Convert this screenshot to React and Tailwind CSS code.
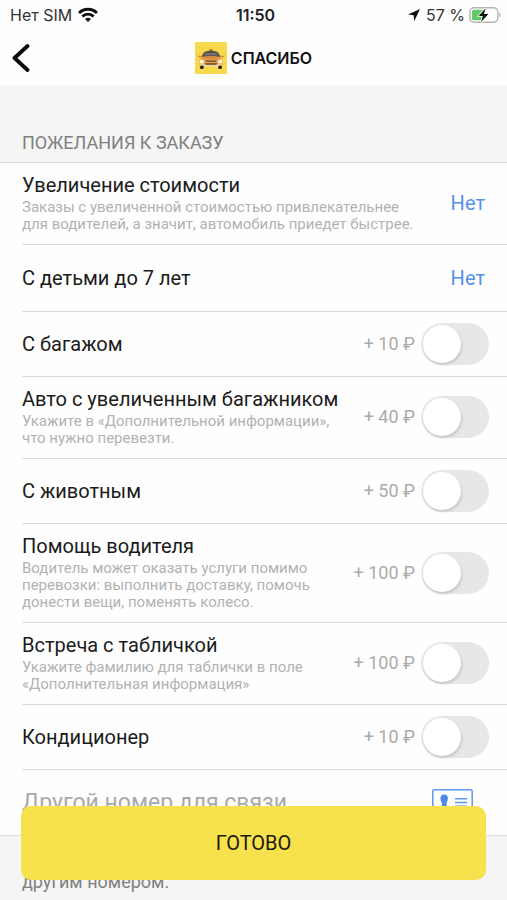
import React from "react";

const rows = [
  {
    id: "raise",
    title: "Увеличение стоимости",
    lines: ["Заказы с увеличенной стоимостью привлекательнее", "для водителей, а значит, автомобиль приедет быстрее."],
    value: "Нет",
  },
  { id: "kids", title: "С детьми до 7 лет", value: "Нет" },
  { id: "luggage", title: "С багажом", price: "+ 10 ₽" },
  {
    id: "trunk",
    title: "Авто с увеличенным багажником",
    lines: ["Укажите в «Дополнительной информации»,", "что нужно перевезти."],
    price: "+ 40 ₽",
  },
  { id: "pet", title: "С животным", price: "+ 50 ₽" },
  {
    id: "help",
    title: "Помощь водителя",
    lines: ["Водитель может оказать услуги помимо", "перевозки: выполнить доставку, помочь", "донести вещи, поменять колесо."],
    price: "+ 100 ₽",
  },
  {
    id: "sign",
    title: "Встреча с табличкой",
    lines: ["Укажите фамилию для таблички в поле", "«Дополнительная информация»"],
    price: "+ 100 ₽",
  },
  { id: "ac", title: "Кондиционер", price: "+ 10 ₽" },
];

function WifiIcon() {
  return (
    <svg className="h-4 w-5" viewBox="0 0 20 16" fill="none" stroke="#111" strokeWidth="2.8" aria-hidden="true">
      <path d="M1 6C6 1 14 1 19 6" />
      <path d="M4.3 9.6c3.3-3.300 8.100-3.300 11.400 0" />
      <path d="M10 15l-3-3c1.700-1.700 4.300-1.700 6 0z" fill="#111" stroke="none" />
    </svg>
  );
}

function BatteryIcon() {
  return (
    <svg className="h-4 w-8" viewBox="0 0 32 16" aria-hidden="true">
      <rect x="0.8" y="0.8" width="28" height="14.4" rx="4.4" fill="#fff" stroke="#b4b4b4" strokeWidth="1.4" />
      <path d="M30.3 5.6c1.6.6 1.6 4.2 0 4.8z" fill="#a9a9a9" />
      <rect x="2.8" y="2.8" width="12.6" height="10.4" rx="2" fill="#62c866" />
      <path d="M16.6 1.2L9.6 8.9h4.2l-1.6 6.2 7.2-8h-4.5z" fill="#111" stroke="#fff" strokeWidth="1.6" paintOrder="stroke" />
    </svg>
  );
}

function TaxiLogo() {
  return (
    <svg className="size-8" viewBox="0 0 32 32" aria-hidden="true">
      <rect width="32" height="32" rx="1" fill="#f8d94c" />
      <rect x="14" y="7" width="4" height="2.6" rx="1" fill="#b9803a" />
      <path d="M6.400 15.400c.8-2.600 2-4.700 3.400-5.600 3.600-1.500 8.800-1.500 12.400 0 1.400.9 2.600 3 3.400 5.600z" fill="#55514c" />
      <path d="M9 13.200l1.600-2.200h10.800l1.600 2.200z" fill="#78736c" />
      <path d="M2.400 13.800h3.200l1 1.400H4zM29.600 13.800h-3.200l-1 1.400H28z" fill="#d97734" />
      <path d="M5.600 15.400c6-1.400 14.800-1.400 20.800 0l1.400 3v5.200H4.200v-5.200z" fill="#f0a24e" />
      <path d="M8 15.400c4.600-.9 11.400-.9 16 0l-1.600 2.200H9.600z" fill="#df8b40" />
      <path d="M4.800 17.600l4.200 1.200-.4 2.600-3.800-.2zM27.200 17.600L23 18.800l.4 2.600 3.800-.2z" fill="#fff7e2" />
      <path d="M10 18.400h12l-1.400 1.400h-9.200z" fill="#5a452f" />
      <path d="M4.600 22.200h22.800l-1.600 2.200H6.200z" fill="#f0d79c" />
      <path d="M9.600 21.200h12.800l-1 1.500H10.600z" fill="#5c4931" />
      <rect x="5" y="23.400" width="3.800" height="3.600" rx="1.600" fill="#242321" />
      <rect x="23.200" y="23.400" width="3.800" height="3.600" rx="1.600" fill="#242321" />
    </svg>
  );
}

function ContactCardIcon() {
  return (
    <svg className="h-7 w-[41px]" viewBox="0 0 41 28" fill="none" stroke="#5c98ef" aria-hidden="true">
      <rect x="0.8" y="0.800" width="39.400" height="26.400" rx="1.500" strokeWidth="1.500" />
      <path d="M12.200 5.400c-2.600 0-4 1.800-3.700 4.300.2 2 .9 3.200 1.400 4.300v2.500l-3.600 2.800v2.300h11.800v-2.300l-3.600-2.800V14c.5-1.100 1.200-2.300 1.400-4.300.3-2.500-1.100-4.300-3.700-4.300z" fill="#4a8bea" stroke="none" />
      <path d="M23 9.700h12M23 13.500h12M23 17.300h12" strokeWidth="1.400" />
    </svg>
  );
}

function Row({ row }) {
  const height = row.lines ? "pt-[10px] pb-[11px]" : row.value ? "h-[67px]" : "h-[65px]";
  return (
    <li className={`flex items-center justify-between border-b border-[#dcdcdc] pr-[18px] ${height}`}>
      <div>
        <label htmlFor={row.id} className="block text-[20px] leading-6 text-[#1b1b1b]">
          {row.title}
        </label>
        {row.lines && (
          <p className="pt-[2px] text-[15px] leading-[17px] text-[#b2b2b2]">
            {row.lines.map((line) => (
              <span key={line} className="block whitespace-nowrap">
                {line}
              </span>
            ))}
          </p>
        )}
      </div>
      {row.value ? (
        <button id={row.id} type="button" className="pr-1 text-[20px] leading-6 text-[#5592ea]">
          {row.value}
        </button>
      ) : (
        <div className="flex shrink-0 items-center gap-[6px]">
          <span className="text-[18px] leading-6 text-[#ababab]">{row.price}</span>
          <input
            id={row.id}
            type="checkbox"
            role="switch"
            className="h-[42px] w-[68px] appearance-none rounded-full bg-[#e7e7e7] p-[2px] before:block before:size-[38px] before:rounded-full before:bg-white before:shadow-[1px_2px_3px_rgba(0,0,0,0.14)] checked:bg-[#f7e14c] checked:before:ml-auto"
          />
        </div>
      )}
    </li>
  );
}

export default function App() {
  return (
    <div className="flex min-h-screen flex-col bg-[#f5f5f5] font-['Roboto','Liberation_Sans',sans-serif]">
      <header className="border-b border-[#f1f1f1] bg-[#fefefe] font-['Inter','Liberation_Sans',sans-serif]">
        <div className="grid h-[30px] grid-cols-[1fr_auto_1fr] items-center pr-[6px] pl-[10px] text-[16px] leading-5 text-[#333]">
          <div className="flex items-center gap-[6px]">
            <span>Нет SIM</span>
            <WifiIcon />
          </div>
          <time className="font-semibold text-[#222]">11:50</time>
          <div className="flex items-center justify-end gap-1">
            <svg className="size-3" viewBox="0 0 12 12" aria-hidden="true">
              <path d="M12 0L0 5.600l5.600.7.700 5.700z" fill="#111" />
            </svg>
            <span className="pl-[2px]">57 %</span>
            <BatteryIcon />
          </div>
        </div>
        <div className="grid h-14 grid-cols-[1fr_auto_1fr] items-center px-3">
          <button type="button" aria-label="Назад" className="w-5">
            <svg className="h-7 w-[18px]" viewBox="0 0 18 28" fill="none" stroke="#0a0a0a" strokeWidth="3.800" strokeLinecap="round" strokeLinejoin="round" aria-hidden="true">
              <path d="M15.500 2L2.500 14l13 12" />
            </svg>
          </button>
          <div className="flex items-center gap-1">
            <TaxiLogo />
            <h1 className="text-[16px] leading-6 font-semibold text-[#111]">СПАСИБО</h1>
          </div>
        </div>
      </header>

      <main>
        <h2 className="border-b border-[#dadada] px-[22px] pt-11 pb-[7px] text-[18px] leading-6 text-[#808080]">
          ПОЖЕЛАНИЯ К ЗАКАЗУ
        </h2>
        <section className="border-b border-[#dedede] bg-[#fefefe] pl-[22px]">
          <ul>
            {rows.map((row) => (
              <Row key={row.id} row={row} />
            ))}
          </ul>
          <div className="flex h-[65px] items-center justify-between pr-[34px]">
            <input
              type="tel"
              aria-label="Другой номер для связи"
              placeholder="Другой номер для связи"
              className="w-80 bg-transparent text-[23px] leading-7 outline-none placeholder:text-[#a9a9a9]"
            />
            <button type="button" aria-label="Контакты">
              <ContactCardIcon />
            </button>
          </div>
        </section>
        <p className="px-[22px] pt-[34px] text-[18px] leading-6 text-[#808080]">другим номером.</p>
      </main>

      <button
        type="button"
        className="fixed inset-x-[21px] bottom-5 h-[74px] rounded-[10px] bg-[#f7e14c] text-[20px] leading-6 text-[#1c1a08]"
      >
        ГОТОВО
      </button>
    </div>
  );
}
